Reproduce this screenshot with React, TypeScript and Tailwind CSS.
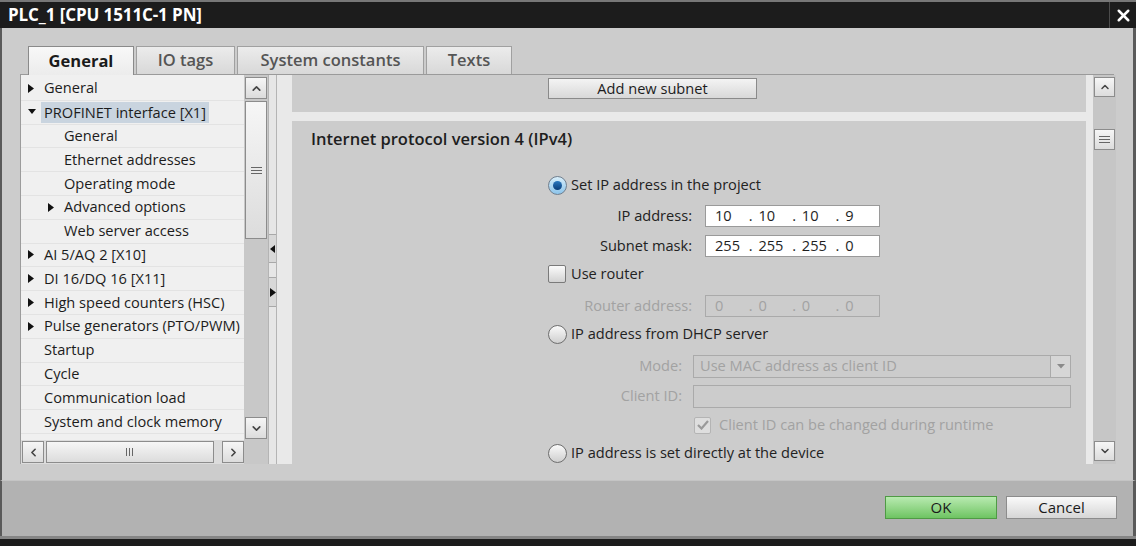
import React from "react";
import { X, ChevronUp, ChevronDown, ChevronLeft, ChevronRight } from "lucide-react";

interface TreeItem {
  label: string;
  level: number;
  arrow?: "right" | "down";
  selected?: boolean;
}

const treeItems: TreeItem[] = [
  { label: "General", level: 0, arrow: "right" },
  { label: "PROFINET interface [X1]", level: 0, arrow: "down", selected: true },
  { label: "General", level: 1 },
  { label: "Ethernet addresses", level: 1 },
  { label: "Operating mode", level: 1 },
  { label: "Advanced options", level: 1, arrow: "right" },
  { label: "Web server access", level: 1 },
  { label: "AI 5/AQ 2 [X10]", level: 0, arrow: "right" },
  { label: "DI 16/DQ 16 [X11]", level: 0, arrow: "right" },
  { label: "High speed counters (HSC)", level: 0, arrow: "right" },
  { label: "Pulse generators (PTO/PWM)", level: 0, arrow: "right" },
  { label: "Startup", level: 0 },
  { label: "Cycle", level: 0 },
  { label: "Communication load", level: 0 },
  { label: "System and clock memory", level: 0 },
  { label: "", level: 0 },
];

const Arrow = ({ dir }: { dir: "right" | "down" | "left" }) => {
  if (dir === "down")
    return (
      <svg width="8" height="6" viewBox="0 0 8 6">
        <polygon points="0,0 8,0 4,5" fill="#111" />
      </svg>
    );
  if (dir === "left")
    return (
      <svg width="5" height="8" viewBox="0 0 5 8">
        <polygon points="5,0 5,8 0,4" fill="#111" />
      </svg>
    );
  return (
    <svg width="6" height="9" viewBox="0 0 6 9">
      <polygon points="0,0 6,4.5 0,9" fill="#111" />
    </svg>
  );
};

// botón de scroll con chevron
const ScrollBtn = ({ children, className = "" }: { children: React.ReactNode; className?: string }) => (
  <div
    className={`flex items-center justify-center border border-[#8c8c8c] bg-gradient-to-b from-[#f6f6f6] to-[#dcdcdc] text-[#444] ${className}`}
  >
    {children}
  </div>
);

const Grip = ({ vertical = false }: { vertical?: boolean }) =>
  vertical ? (
    <svg width="9" height="10" viewBox="0 0 9 10">
      <rect x="0" y="1" width="1" height="8" fill="#666" />
      <rect x="3" y="1" width="1" height="8" fill="#666" />
      <rect x="6" y="1" width="1" height="8" fill="#666" />
    </svg>
  ) : (
    <svg width="11" height="9" viewBox="0 0 11 9">
      <rect x="0" y="1" width="11" height="1" fill="#666" />
      <rect x="0" y="4" width="11" height="1" fill="#666" />
      <rect x="0" y="7" width="11" height="1" fill="#666" />
    </svg>
  );

const Radio = ({ checked = false }: { checked?: boolean }) =>
  checked ? (
    <div className="w-[19px] h-[19px] rounded-full border border-[#6f7f8f] bg-gradient-to-b from-[#d8eefa] to-[#8cc4ea] flex items-center justify-center">
      <div className="w-[9px] h-[9px] rounded-full bg-gradient-to-b from-[#2b79c0] to-[#0b3f7a]" />
    </div>
  ) : (
    <div className="w-[19px] h-[19px] rounded-full border border-[#6e6e6e] bg-gradient-to-b from-[#fafafa] to-[#cfcfcf]" />
  );

const IpBox = ({ parts, disabled = false }: { parts: string[]; disabled?: boolean }) => (
  <div
    className={`w-[175px] h-[22px] border flex items-center pl-[9px] text-[14.6px] ${
      disabled ? "border-[#aaaaaa] bg-[#cccccc] text-[#a2a2a2]" : "border-[#9a9a9a] bg-white text-[#1e1e1e]"
    }`}
  >
    {parts.map((p, i) => (
      <React.Fragment key={i}>
        {i > 0 && <span className="w-[10px]">.</span>}
        <span className="w-[35px]">{p}</span>
      </React.Fragment>
    ))}
  </div>
);

const Tree = () => (
  <div className="w-[248px] h-full flex flex-col border-l border-[#9c9c9c]">
    <div className="flex-1 flex min-h-0">
      <div className="w-[223px] bg-[#f0f0f0] overflow-hidden pt-[2px]">
        {treeItems.map((it, i) => (
          <div
            key={i}
            className={`h-[23.8px] flex items-center border-b border-[#e3e3e3] ${it.level === 0 ? "pl-[7px]" : "pl-[27px]"}`}
          >
            <div className="w-[16px] flex items-center">{it.arrow && <Arrow dir={it.arrow} />}</div>
            <span
              className={`whitespace-nowrap text-[14.6px] text-[#1c1c1c] ${
                it.selected ? "bg-[#c9d4df] -ml-[3px] px-[3px] leading-[21px]" : ""
              }`}
            >
              {it.label}
            </span>
          </div>
        ))}
      </div>
      <div className="w-[24px] bg-[#c8c8c8] flex flex-col pl-px pr-px pt-[2px] pb-px">
        <ScrollBtn className="h-[22px]">
          <ChevronUp size={13} strokeWidth={3} />
        </ScrollBtn>
        <ScrollBtn className="h-[138px] mt-[2px]">
          <Grip />
        </ScrollBtn>
        <div className="flex-1" />
        <ScrollBtn className="h-[22px]">
          <ChevronDown size={13} strokeWidth={3} />
        </ScrollBtn>
      </div>
    </div>
    <div className="h-[24px] flex bg-[#c8c8c8]">
      <div className="w-[223px] flex items-center gap-[2px] pl-px bg-[#dcdcdc] py-px">
        <ScrollBtn className="w-[22px] h-full">
          <ChevronLeft size={13} strokeWidth={3} />
        </ScrollBtn>
        <ScrollBtn className="w-[168px] h-full">
          <Grip vertical />
        </ScrollBtn>
        <div className="flex-1" />
        <ScrollBtn className="w-[22px] h-full">
          <ChevronRight size={13} strokeWidth={3} />
        </ScrollBtn>
      </div>
      <div className="flex-1" />
    </div>
  </div>
);

const Splitter = () => (
  <div className="w-[9px] h-full flex flex-col bg-[#e6e6e6] border-x border-[#b4b4b4] pt-[159px]">
    <div className="h-[29px] border-y border-[#a8a8a8] bg-[#d8d8d8] flex items-center justify-center">
      <Arrow dir="left" />
    </div>
    <div className="h-[14px]" />
    <div className="h-[30px] border-y border-[#a8a8a8] bg-[#d8d8d8] flex items-center justify-center">
      <Arrow dir="right" />
    </div>
  </div>
);

const Form = () => (
  <div className="flex-1 bg-[#cccccc] overflow-hidden text-[14.6px] text-[#222] pt-px">
    <div className="h-[34px] flex items-center pl-[19px] text-[16.5px] font-semibold text-[#1e1e1e]">
      Internet protocol version 4 (IPv4)
    </div>
    <div className="mt-[18px] h-[22px] flex items-center pl-[256px] gap-[4px]">
      <Radio checked />
      <span>Set IP address in the project</span>
    </div>
    <div className="mt-[9px] h-[22px] flex items-center">
      <span className="w-[400px] text-right">IP address:</span>
      <div className="ml-[13px]">
        <IpBox parts={["10", "10", "10", "9"]} />
      </div>
    </div>
    <div className="mt-[8px] h-[22px] flex items-center">
      <span className="w-[400px] text-right">Subnet mask:</span>
      <div className="ml-[13px]">
        <IpBox parts={["255", "255", "255", "0"]} />
      </div>
    </div>
    <div className="mt-[6px] h-[22px] flex items-center pl-[256px] gap-[5px]">
      <div className="w-[18px] h-[18px] rounded-[2px] border border-[#7a7a7a] bg-gradient-to-b from-[#fbfbfb] to-[#d2d2d2]" />
      <span>Use router</span>
    </div>
    <div className="mt-[10px] h-[22px] flex items-center text-[#a2a2a2]">
      <span className="w-[400px] text-right">Router address:</span>
      <div className="ml-[13px]">
        <IpBox parts={["0", "0", "0", "0"]} disabled />
      </div>
    </div>
    <div className="mt-[6px] h-[22px] flex items-center pl-[256px] gap-[4px]">
      <Radio />
      <span>IP address from DHCP server</span>
    </div>
    <div className="mt-[10px] h-[22px] flex items-center text-[#a2a2a2]">
      <span className="w-[390px] text-right">Mode:</span>
      <div className="ml-[11px] w-[378px] h-[23px] border border-[#aaaaaa] flex items-center">
        <span className="flex-1 pl-[6px]">Use MAC address as client ID</span>
        <div className="w-[20px] h-full border-l border-[#aaaaaa] bg-[#d6d6d6] flex items-center justify-center">
          <svg width="8" height="5" viewBox="0 0 8 5">
            <polygon points="0,0 8,0 4,4.5" fill="#8a8a8a" />
          </svg>
        </div>
      </div>
    </div>
    <div className="mt-[8px] h-[22px] flex items-center text-[#a2a2a2]">
      <span className="w-[390px] text-right">Client ID:</span>
      <div className="ml-[11px] w-[378px] h-[23px] border border-[#aaaaaa]" />
    </div>
    <div className="mt-[7px] h-[22px] flex items-center pl-[402px] gap-[8px] text-[#a2a2a2]">
      <div className="w-[17px] h-[17px] rounded-[2px] border border-[#b4b4b4] bg-[#dedede] flex items-center justify-center">
        <svg width="12" height="10" viewBox="0 0 12 10">
          <polyline points="1,5 4.5,8.5 11,1" fill="none" stroke="#9a9a9a" strokeWidth="2.2" />
        </svg>
      </div>
      <span>Client ID can be changed during runtime</span>
    </div>
    <div className="mt-[6px] h-[22px] flex items-center pl-[256px] gap-[4px]">
      <Radio />
      <span>IP address is set directly at the device</span>
    </div>
  </div>
);

const tabs = ["General", "IO tags", "System constants", "Texts"];
const tabWidths = ["w-[106px]", "w-[99px]", "w-[187px]", "w-[86px]"];

export default function App() {
  return (
    <div className="w-[1136px] h-[546px] flex flex-col bg-[#cccccc] font-['Open_Sans',sans-serif] overflow-hidden">
      {/* barra de título */}
      <div className="h-[28px] flex border-t-2 border-[#777] bg-[#1c1c1c]">
        <div className="flex-1 pl-[8px] flex items-center text-white font-bold text-[17px] tracking-[-0.1px]">
          PLC_1 [CPU 1511C-1 PN]
        </div>
        <div className="w-[27px] border-l border-[#4c4c4c] flex items-center justify-center text-white">
          <X size={19} strokeWidth={3.2} />
        </div>
      </div>

      <div className="flex-1 flex flex-col border-x-2 border-[#5a5a5a] border-r-[3px]">
        {/* pestañas */}
        <div className="h-[47px] flex items-end gap-[2px] border-b border-[#9a9a9a] ml-[18px] w-[1094px] pl-[8px]">
          {tabs.map((t, i) => (
            <div
              key={t}
              className={`${tabWidths[i]} flex items-center justify-center text-[16.5px] border border-b-0 ${
                i === 0
                  ? "bg-gradient-to-b from-[#f8f8f8] to-[#ececec] border-[#8a8a8a] font-bold text-[#1a1a1a] -mb-px h-[29px]"
                  : "h-[28px] bg-gradient-to-b from-[#ececec] to-[#d8d8d8] border-[#a0a0a0] font-semibold text-[#555]"
              }`}
            >
              {t}
            </div>
          ))}
        </div>

        {/* contenido */}
        <div className="h-[389px] flex pl-[18px]">
          <Tree />
          <Splitter />
          <div className="w-[816px] h-full bg-[#e9e9e9] pl-[15px] pr-[7px] flex flex-col">
            <div className="h-[37px] bg-[#cccccc] pl-[256px] pt-[3px]">
              <div className="w-[209px] h-[21px] border border-[#8a8a8a] bg-gradient-to-b from-[#f4f4f4] to-[#d8d8d8] flex items-center justify-center text-[14.6px] text-[#1c1c1c]">
                Add new subnet
              </div>
            </div>
            <div className="h-[9px]" />
            <Form />
          </div>
          <div className="w-[23px] h-full bg-[#c6c6c6] flex flex-col pt-[2px] pb-[3px] px-px">
            <ScrollBtn className="h-[20px]">
              <ChevronUp size={12} strokeWidth={3} />
            </ScrollBtn>
            <ScrollBtn className="h-[21px] mt-[32px]">
              <Grip />
            </ScrollBtn>
            <div className="flex-1" />
            <ScrollBtn className="h-[20px]">
              <ChevronDown size={12} strokeWidth={3} />
            </ScrollBtn>
          </div>
        </div>
        <div className="flex-1" />
      </div>

      {/* botones */}
      <div className="h-[56px] bg-[#b2b2b2] border-x-2 border-[#5a5a5a] border-r-[3px] border-t border-t-[#c4c4c4] flex items-start justify-end pt-[15px] pr-[16px] gap-[9px]">
        <div className="w-[112px] h-[23px] border border-[#4f9a45] bg-gradient-to-b from-[#b8eab0] to-[#6ec462] flex items-center justify-center text-[15px] text-[#1a1a1a]">
          OK
        </div>
        <div className="w-[111px] h-[23px] border border-[#8c8c8c] bg-gradient-to-b from-[#fafafa] to-[#d6d6d6] flex items-center justify-center text-[15px] text-[#1a1a1a]">
          Cancel
        </div>
      </div>
      <div className="h-[10px] bg-[#1c1c1c] border-t-[3px] border-[#858585]" />
    </div>
  );
}
